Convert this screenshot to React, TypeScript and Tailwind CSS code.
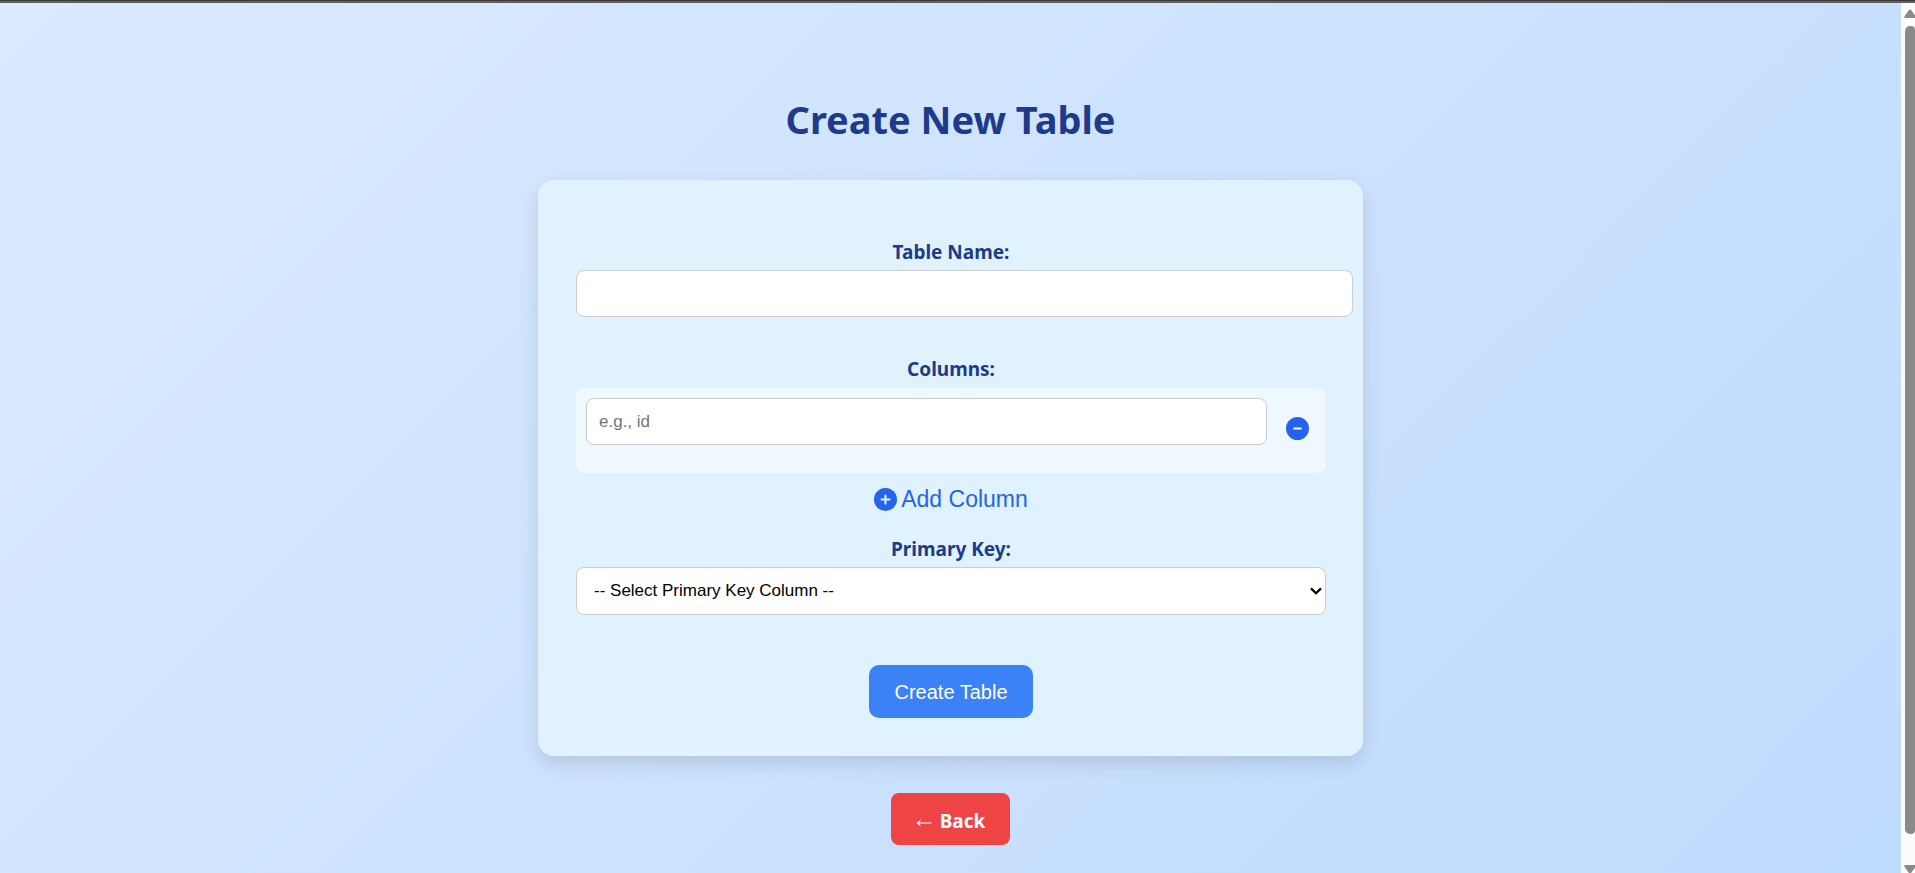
import { useState } from "react";
import { FaCircleMinus, FaCirclePlus } from "react-icons/fa6";

const label =
  "block text-center text-[19px] leading-7 font-bold text-[#1e3a8a] font-['Noto_Sans',sans-serif]";
const field =
  "block rounded-lg border border-[#cccccc] bg-white font-['Liberation_Sans',Arial,sans-serif] text-[17px] text-black";

function Scrollbar() {
  return (
    <div aria-hidden="true" className="flex w-3.5 shrink-0 flex-col items-end bg-[#fcfcfc]">
      <svg className="mt-1.5 h-[9px] w-[11px] shrink-0" viewBox="0 0 11 9" fill="#8a8a8a">
        <path d="M11 9 H1.2 Q-0.4 8.600 0.6 7 L5 0.9 Q6 -0.4 7 0.9 L11 6.500Z" />
      </svg>
      <div className="my-2 w-2.5 flex-1 rounded-l-[5px] rounded-r-sm bg-[#8a8a8a]" />
      <svg className="mt-[23px] h-2 w-[11px] shrink-0" viewBox="0 0 11 8" fill="#8a8a8a">
        <path d="M11 0 H1.2 Q-0.4 0.400 0.6 2 L4.900 8 H7.100 L11 2.500Z" />
      </svg>
    </div>
  );
}

export default function App() {
  const [columns, setColumns] = useState([""]);
  const [primaryKey, setPrimaryKey] = useState("");

  return (
    <div className="flex min-h-screen flex-col">
      <div className="h-[3px] border-t border-[#3a3a3a] bg-[#606060]" />
      <div className="flex flex-1">
        <main className="flex flex-1 flex-col items-center bg-linear-135 from-[#dbeafe] to-[#bfdbfe] px-4 pt-[88px] pb-5">
          <h1 className="mb-[33px] text-center text-[38px] leading-[56px] font-bold text-[#1e3a8a] font-['Noto_Sans',sans-serif]">
            Create New Table
          </h1>
          <form
            onSubmit={(e) => e.preventDefault()}
            className="w-full max-w-[825px] rounded-2xl bg-[#e0f2fe] pr-[37px] pl-[38px] pt-[58px] pb-[38px] shadow-[0_8px_20px_rgba(0,0,0,0.12)]"
          >
            <label htmlFor="table-name" className={label}>
              Table Name:
            </label>
            <input
              id="table-name"
              type="text"
              className={`${field} mt-1 -mr-7 h-[47px] w-[calc(100%+27px)] px-3`}
            />

            <h2 className={`${label} mt-[38px]`}>Columns:</h2>
            <div className="mt-[5px]">
              {columns.map((value, i) => (
                <div key={i} className="flex items-center rounded-lg bg-[#f0f8ff] p-2.5">
                  <input
                    type="text"
                    aria-label={`Column ${i + 1}`}
                    placeholder="e.g., id"
                    value={value}
                    onChange={(e) => setColumns(columns.map((c, j) => (j === i ? e.target.value : c)))}
                    className={`${field} mb-[18px] h-[47px] min-w-0 flex-1 px-3 placeholder:text-[#757575]`}
                  />
                  <button
                    type="button"
                    aria-label="Remove column"
                    onClick={() => setColumns(columns.filter((_, j) => j !== i))}
                    className="ml-[19px] mr-[7px] pb-1 text-[#2563eb]"
                  >
                    <FaCircleMinus className="size-[23px]" />
                  </button>
                </div>
              ))}
            </div>
            <button
              type="button"
              onClick={() => setColumns([...columns, ""])}
              className="mx-auto mt-3 flex h-7 items-center gap-1 font-['Liberation_Sans',Arial,sans-serif] text-[23px] leading-7 text-[#2563eb]"
            >
              <FaCirclePlus className="size-[23px]" />
              Add Column
            </button>

            <label htmlFor="primary-key" className={`${label} mt-[22px]`}>
              Primary Key:
            </label>
            <div className="relative mt-1">
              <select
                id="primary-key"
                value={primaryKey}
                onChange={(e) => setPrimaryKey(e.target.value)}
                className={`${field} h-12 w-full appearance-none pr-8 pl-[17px]`}
              >
                <option value="">-- Select Primary Key Column --</option>
                {columns.filter(Boolean).map((c) => (
                  <option key={c}>{c}</option>
                ))}
              </select>
              <svg
                aria-hidden="true"
                className="pointer-events-none absolute top-5 right-1 h-2 w-3"
                viewBox="0 0 12 8"
                fill="none"
                stroke="black"
                strokeWidth="2.200"
              >
                <path d="M1 1.400 L6 6.200 L11 1.400" />
              </svg>
            </div>

            <button
              type="submit"
              className="mx-auto mt-[50px] block h-[53px] rounded-[10px] bg-[#3b82f6] px-[25px] font-['Liberation_Sans',Arial,sans-serif] text-[20px] text-white"
            >
              Create Table
            </button>
          </form>
          <a
            href="#"
            className="mt-[37px] flex h-[52px] items-center gap-2 rounded-lg bg-[#ef4444] px-[25px] pt-1 text-[19px] font-bold text-white font-['Noto_Sans',sans-serif]"
          >
            <svg aria-hidden="true" className="mt-1 h-2.5 w-4" viewBox="0 0 16 10" fill="white">
              <path d="M0.500 5 L5 1.200 L3.600 4.400 H15.500 V5.600 H3.600 L5 8.800Z" />
            </svg>
            Back
          </a>
        </main>
        <Scrollbar />
      </div>
    </div>
  );
}
